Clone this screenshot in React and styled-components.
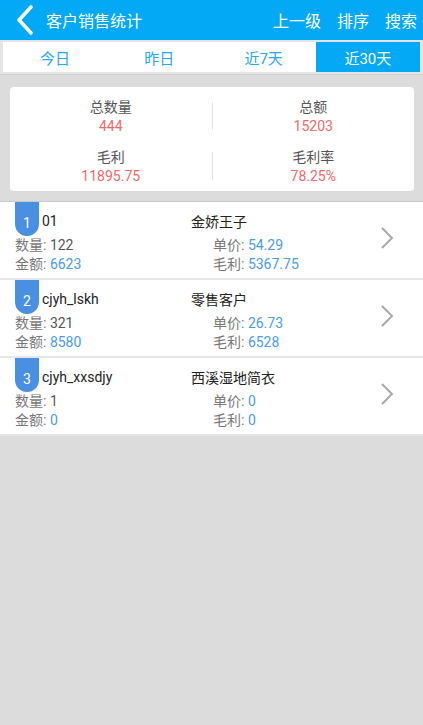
import React from "react";
import styled, { createGlobalStyle } from "styled-components";

const GlobalStyle = createGlobalStyle`
  html, body {
    margin: 0;
    padding: 0;
    background: #dcdcdc;
  }
  body {
    font-family: Roboto, "Noto Sans CJK SC", sans-serif;
  }
`;

const tabs = ["今日", "昨日", "近7天", "近30天"];

const rows = [
  { no: 1, code: "01", name: "金娇王子", qty: "122", amount: "6623", price: "54.29", profit: "5367.75" },
  { no: 2, code: "cjyh_lskh", name: "零售客户", qty: "321", amount: "8580", price: "26.73", profit: "6528" },
  { no: 3, code: "cjyh_xxsdjy", name: "西溪湿地简衣", qty: "1", amount: "0", price: "0", profit: "0" },
];

const App = () => {
  return (
    <Page>
      <GlobalStyle />
      <Header>
        <BackButton>
          <svg width="18" height="32" viewBox="0 0 18 32">
            <path d="M15 3 L3 16 L15 29" fill="none" stroke="#fff" strokeWidth="3.6" strokeLinecap="round" strokeLinejoin="round" />
          </svg>
        </BackButton>
        <Title>客户销售统计</Title>
        <Actions>
          <Action>上一级</Action>
          <Action>排序</Action>
          <Action>搜索</Action>
        </Actions>
      </Header>

      <TabBar>
        {tabs.map((t, i) => (
          <Tab key={t} active={i === 3}>{t}</Tab>
        ))}
      </TabBar>

      <SummaryCard>
        <SummaryRow>
          <SummaryCell>
            <SumLabel>总数量</SumLabel>
            <SumValue>444</SumValue>
          </SummaryCell>
          <Divider />
          <SummaryCell>
            <SumLabel>总额</SumLabel>
            <SumValue>15203</SumValue>
          </SummaryCell>
        </SummaryRow>
        <SummaryRow>
          <SummaryCell>
            <SumLabel>毛利</SumLabel>
            <SumValue>11895.75</SumValue>
          </SummaryCell>
          <Divider />
          <SummaryCell>
            <SumLabel>毛利率</SumLabel>
            <SumValue>78.25%</SumValue>
          </SummaryCell>
        </SummaryRow>
      </SummaryCard>

      <List>
        {rows.map((r) => (
          <Row key={r.no}>
            <RowBody>
              <TopLine>
                <CodeCell>
                  <Badge>{r.no}</Badge>
                  <Code>{r.code}</Code>
                </CodeCell>
                <Name>{r.name}</Name>
              </TopLine>
              <StatLine>
                <Stat>数量: <StatValue>{r.qty}</StatValue></Stat>
                <Stat>单价: <StatValue blue>{r.price}</StatValue></Stat>
              </StatLine>
              <StatLine>
                <Stat>金额: <StatValue blue>{r.amount}</StatValue></Stat>
                <Stat>毛利: <StatValue blue>{r.profit}</StatValue></Stat>
              </StatLine>
            </RowBody>
            <Chevron>
              <svg width="16" height="26" viewBox="0 0 16 26">
                <path d="M3 3 L13 13 L3 23" fill="none" stroke="#a9a9a9" strokeWidth="2" />
              </svg>
            </Chevron>
          </Row>
        ))}
      </List>
    </Page>
  );
};

export default App;

const Page = styled.div`
  min-height: 725px;
  background: #dcdcdc;
`;

const Header = styled.div`
  height: 40px;
  background: #03a9f4;
  display: flex;
  align-items: center;
  color: #fff;
`;

const BackButton = styled.div`
  width: 46px;
  height: 40px;
  display: flex;
  align-items: center;
  padding-left: 16px;
  box-sizing: border-box;
`;

const Title = styled.div`
  font-size: 16px;
  flex: 1;
`;

const Actions = styled.div`
  display: flex;
  gap: 16px;
  padding-right: 6px;
`;

const Action = styled.div`
  font-size: 16px;
`;

const TabBar = styled.div`
  display: grid;
  grid-template-columns: repeat(4, 1fr);
  margin: 0;
  padding: 2px 3px;
  background: #e4e4e4;
  border-bottom: 1px solid #cfcfcf;
`;

const Tab = styled.div`
  height: 30px;
  display: flex;
  align-items: center;
  justify-content: center;
  font-size: 15px;
  background: ${(p) => (p.active ? "#03a9f4" : "#fff")};
  color: ${(p) => (p.active ? "#fff" : "#29a7ee")};
`;

const SummaryCard = styled.div`
  margin: 12px 9px 10px 10px;
  background: #fff;
  border-radius: 4px;
  padding: 4px 0 0;
`;

const SummaryRow = styled.div`
  display: flex;
  align-items: center;
  height: 50px;
`;

const SummaryCell = styled.div`
  flex: 1;
  display: flex;
  flex-direction: column;
  align-items: center;
`;

const Divider = styled.div`
  width: 1px;
  height: 28px;
  background: #e2e2e2;
`;

const SumLabel = styled.div`
  font-size: 14px;
  color: #555;
  line-height: 20px;
`;

const SumValue = styled.div`
  font-size: 14px;
  color: #f0696b;
  line-height: 18px;
`;

const List = styled.div`
  border-top: 1px solid #c9c9c9;
  background: #fff;
`;

const Row = styled.div`
  display: flex;
  align-items: center;
  padding: 0 0 4px 15px;
  border-bottom: 2px solid #e6e6e6;
`;

const RowBody = styled.div`
  flex: 1;
`;

const TopLine = styled.div`
  display: grid;
  grid-template-columns: 176px 1fr;
  align-items: center;
  height: 34px;
`;

const CodeCell = styled.div`
  display: flex;
  align-items: center;
`;

const Badge = styled.div`
  width: 24px;
  height: 34px;
  background: #4a90e2;
  border-radius: 0 0 12px 12px;
  color: #fff;
  font-size: 14px;
  display: flex;
  align-items: flex-end;
  justify-content: center;
  padding-bottom: 5px;
  box-sizing: border-box;
`;

const Code = styled.div`
  margin-left: 3px;
  padding-top: 3px;
  font-size: 14px;
  color: #222;
`;

const Name = styled.div`
  font-size: 14px;
  padding-top: 3px;
  color: #222;
`;

const StatLine = styled.div`
  display: grid;
  grid-template-columns: 198px 1fr;
  height: 19px;
  line-height: 19px;
`;

const Stat = styled.div`
  font-size: 14px;
  color: #777;
`;

const StatValue = styled.span`
  color: ${(p) => (p.blue ? "#4a9be8" : "#555")};
`;

const Chevron = styled.div`
  width: 44px;
  display: flex;
  align-items: center;
  padding-left: 2px;
`;
